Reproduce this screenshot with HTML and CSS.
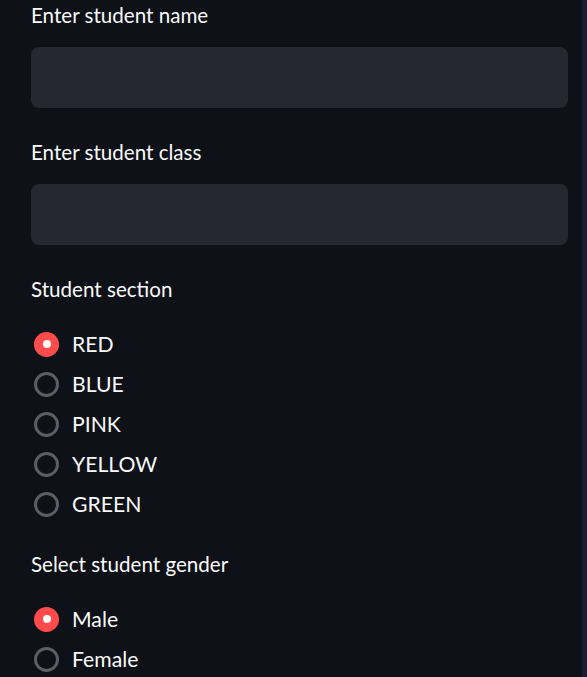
FILE: index.html
```html
<!DOCTYPE html>
<html lang="en">
<head>
<meta charset="utf-8">
<title>Student form</title>
<link rel="stylesheet" href="styles.css">
</head>
<body>
<div class="page">
  <main class="form">
    <div class="field">
      <label class="label" for="name">Enter student name</label>
      <input class="text-input" id="name" type="text">
    </div>
    <div class="field">
      <label class="label" for="cls">Enter student class</label>
      <input class="text-input" id="cls" type="text">
    </div>
    <div class="field radio-field">
      <div class="label">Student section</div>
      <div class="options">
        <div class="option"><span class="dot checked"></span><span class="opt-text">RED</span></div>
        <div class="option"><span class="dot"></span><span class="opt-text">BLUE</span></div>
        <div class="option"><span class="dot"></span><span class="opt-text">PINK</span></div>
        <div class="option"><span class="dot"></span><span class="opt-text">YELLOW</span></div>
        <div class="option"><span class="dot"></span><span class="opt-text">GREEN</span></div>
      </div>
    </div>
    <div class="field radio-field">
      <div class="label">Select student gender</div>
      <div class="options">
        <div class="option"><span class="dot checked"></span><span class="opt-text">Male</span></div>
        <div class="option"><span class="dot"></span><span class="opt-text">Female</span></div>
      </div>
    </div>
  </main>
  <div class="edge"></div>
</div>
</body>
</html>
```
FILE: styles.css
```css
* { box-sizing: border-box; }
html, body {
  margin: 0;
  padding: 0;
  background: #0e1117;
  height: 100%;
  overflow: hidden;
}
body {
  font-family: "Lato", "Open Sans", sans-serif;
  color: #fafafa;
}
.page {
  display: flex;
  height: 677px;
}
.form {
  flex: 1;
  padding-left: 31px;
  padding-right: 14px;
  display: flex;
  flex-direction: column;
}
.edge {
  width: 5px;
  background: #1b1e30;
}
.field {
  display: flex;
  flex-direction: column;
}
.field + .field { margin-top: 29px; }
.label {
  height: 32px;
  line-height: 30px;
  font-size: 20.6px;
  color: #fafafa;
}
.text-input {
  margin-top: 15px;
  height: 61px;
  border: none;
  border-radius: 8px;
  background: #262730;
  outline: none;
  width: 100%;
}
.radio-field { margin-top: 29px; }
.options {
  margin-top: 18px;
  display: flex;
  flex-direction: column;
}
.option {
  height: 40px;
  display: flex;
  align-items: center;
  gap: 13px;
  padding-left: 3px;
}
.dot {
  width: 25px;
  height: 25px;
  border-radius: 50%;
  border: 3px solid #5c5e66;
  flex: none;
  display: flex;
  align-items: center;
  justify-content: center;
}
.dot.checked {
  border: none;
  background: #ff4b4b;
}
.dot.checked::after {
  content: "";
  width: 8px;
  height: 8px;
  border-radius: 50%;
  background: #fafafa;
}
.opt-text {
  font-size: 21.2px;
  line-height: 40px;
}
.radio-field + .radio-field { margin-top: 25px; }
```
